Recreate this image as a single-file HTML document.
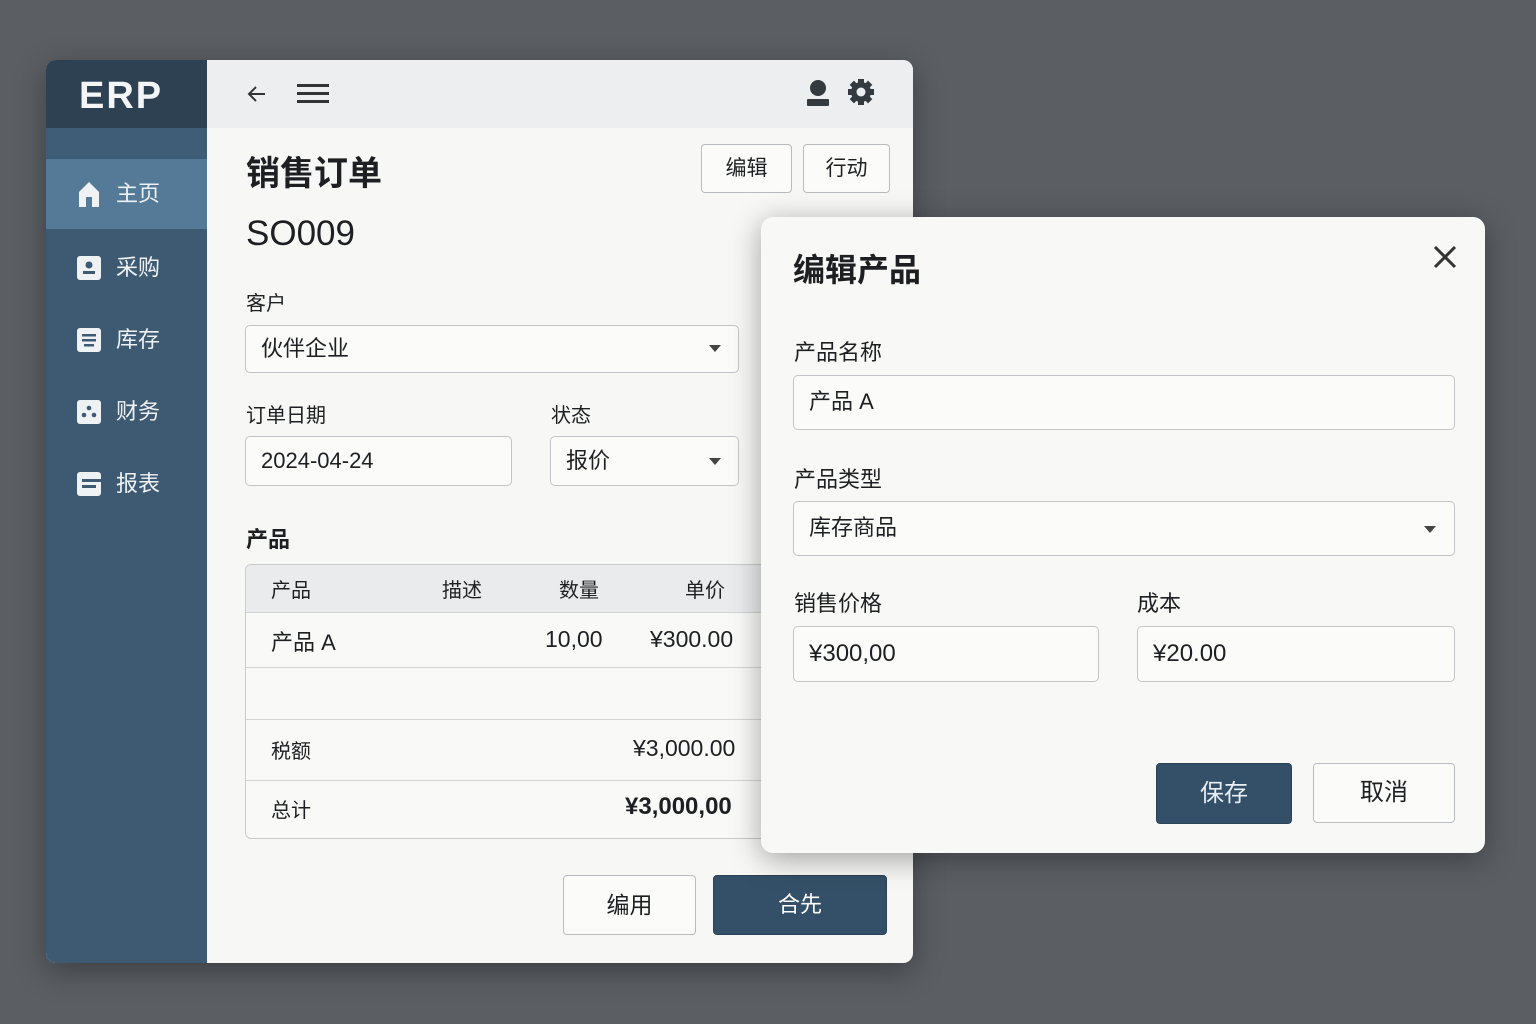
<!DOCTYPE html>
<html><head><meta charset="utf-8"><style>
*{box-sizing:border-box;margin:0;padding:0}
body{width:1536px;height:1024px;background:#5b5f64;font-family:"Liberation Sans","Noto Sans CJK SC",sans-serif;color:#1d1f22;position:relative;overflow:hidden}
.abs{position:absolute}
.win{left:46px;top:60px;width:867px;height:903px;background:#f7f7f5;border-radius:10px;overflow:hidden;box-shadow:0 8px 30px rgba(0,0,0,.35)}
.side{left:0;top:0;width:161px;height:903px;background:#3d5a72}
.logo{left:0;top:0;width:161px;height:68px;background:#2d4152;color:#f3f5f7;font-weight:bold;font-size:38px;letter-spacing:2px;padding:15px 0 0 33px}
.strip{left:0;top:68px;width:161px;height:30px;background:#3f5d76}
.nav{left:0;width:161px;height:70px;color:#eef2f5;font-size:22px;padding-left:70px;line-height:70px}
.nav.act{background:#547a98}
.nav i{position:absolute;left:31px;top:23px;width:24px;height:24px;background:#eef2f5;border-radius:3px}
.hdr{left:161px;top:0;width:706px;height:68px;background:#eceef0}
.t{position:absolute;white-space:nowrap}
.btn{position:absolute;border:1px solid #b8bbbf;border-radius:4px;background:#fbfbfa;text-align:center;font-size:21px}
.inp{position:absolute;border:1.5px solid #c3c5c8;border-radius:5px;background:#fbfbfa;font-size:22px;padding-left:15px}
.caret{position:absolute;width:0;height:0;border-left:6px solid transparent;border-right:6px solid transparent;border-top:7px solid #444}
.dlg{left:761px;top:217px;width:724px;height:636px;background:#f8f8f6;border-radius:12px;box-shadow:0 6px 30px rgba(0,0,0,.35)}
</style></head><body>
<div class="abs win">
 <div class="abs side">
  <div class="abs logo">ERP</div>
  <div class="abs strip"></div>
  <div class="abs nav act" style="top:99px">主页<svg style="position:absolute;left:31px;top:22px" width="24" height="26" viewBox="0 0 24 26"><path d="M2 11 L12 1 L22 11 V26 H15 V16 H9 V26 H2Z" fill="#eef2f5"/></svg></div>
  <div class="abs nav" style="top:173px">采购<i></i><svg style="position:absolute;left:31px;top:23px" width="24" height="24"><circle cx="12" cy="9" r="3.5" fill="#3d5a72"/><rect x="6" y="15" width="12" height="3" fill="#3d5a72"/></svg></div>
  <div class="abs nav" style="top:245px">库存<i></i><svg style="position:absolute;left:31px;top:23px" width="24" height="24"><rect x="5" y="6" width="14" height="2.5" fill="#3d5a72"/><rect x="5" y="11" width="14" height="2.5" fill="#3d5a72"/><rect x="7" y="16" width="10" height="2.5" fill="#3d5a72"/></svg></div>
  <div class="abs nav" style="top:317px">财务<i></i><svg style="position:absolute;left:31px;top:23px" width="24" height="24"><circle cx="12" cy="8" r="2.3" fill="#3d5a72"/><circle cx="7" cy="15" r="2.3" fill="#3d5a72"/><circle cx="17" cy="15" r="2.3" fill="#3d5a72"/></svg></div>
  <div class="abs nav" style="top:389px">报表<i></i><svg style="position:absolute;left:31px;top:23px" width="24" height="24"><rect x="5" y="7" width="19" height="3" fill="#3d5a72"/><rect x="5" y="13" width="14" height="3" fill="#3d5a72"/></svg></div>
 </div>
 <div class="abs hdr">
  <svg class="abs" style="left:38px;top:22px" width="24" height="24" viewBox="0 0 24 24"><path d="M20 12H4M11 5 4 12 11 19" stroke="#333" stroke-width="2" fill="none"/></svg>
  <svg class="abs" style="left:90px;top:22px" width="32" height="22"><rect y="2" width="32" height="3" fill="#333"/><rect y="10" width="32" height="3" fill="#333"/><rect y="18" width="32" height="3" fill="#333"/></svg>
  <svg class="abs" style="left:598px;top:18px" width="26" height="30"><circle cx="13" cy="10" r="8" fill="#333a40"/><rect x="2" y="21" width="22" height="7" rx="1" fill="#333a40"/></svg>
  <svg class="abs" style="left:640px;top:18px" width="28" height="28" viewBox="0 0 28 28"><g fill="#333a40" transform="translate(14 14)"><rect x="-3" y="-13" width="6" height="26"/><rect x="-3" y="-13" width="6" height="26" transform="rotate(45)"/><rect x="-3" y="-13" width="6" height="26" transform="rotate(90)"/><rect x="-3" y="-13" width="6" height="26" transform="rotate(135)"/><circle r="10"/></g><circle cx="14" cy="14" r="4.5" fill="#eceef0"/></svg>
 </div>
 <div class="t" style="left:200px;top:86px;font-size:34px;font-weight:bold">销售订单</div>
 <div class="btn" style="left:655px;top:84px;width:91px;height:49px;line-height:47px">编辑</div>
 <div class="btn" style="left:757px;top:84px;width:87px;height:49px;line-height:47px">行动</div>
 <div class="t" style="left:200px;top:154px;font-size:35px">SO009</div>
 <div class="t" style="left:200px;top:227px;font-size:20px">客户</div>
 <div class="inp" style="left:199px;top:265px;width:494px;height:48px;line-height:45px">伙伴企业</div><div class="caret" style="left:663px;top:285px"></div>
 <div class="t" style="left:200px;top:339px;font-size:20px">订单日期</div>
 <div class="t" style="left:505px;top:339px;font-size:20px">状态</div>
 <div class="inp" style="left:199px;top:376px;width:267px;height:50px;line-height:47px">2024-04-24</div>
 <div class="inp" style="left:504px;top:376px;width:189px;height:50px;line-height:47px">报价</div><div class="caret" style="left:663px;top:398px"></div>
 <div class="t" style="left:200px;top:462px;font-size:22px;font-weight:bold">产品</div>
 <div class="abs" style="left:199px;top:504px;width:700px;height:275px;border:1.5px solid #c8cacc;border-radius:6px;background:#f9f9f8;overflow:hidden;font-size:20px">
  <div class="abs" style="left:0;top:0;width:700px;height:48px;background:#e9ebed;border-bottom:1.5px solid #cfd1d3"></div>
  <div class="t" style="left:25px;top:9px">产品</div><div class="t" style="left:196px;top:9px">描述</div><div class="t" style="left:313px;top:9px">数量</div><div class="t" style="left:439px;top:9px">单价</div>
  <div class="t" style="left:25px;top:60px;font-size:22px">产品 A</div><div class="t" style="left:299px;top:61px;font-size:23px">10,00</div><div class="t" style="left:404px;top:61px;font-size:23px">¥300.00</div>
  <div class="abs" style="left:0;top:102px;width:700px;border-top:1.5px solid #d3d5d7"></div>
  <div class="abs" style="left:0;top:154px;width:700px;border-top:1.5px solid #d3d5d7"></div>
  <div class="t" style="left:25px;top:170px">税额</div><div class="t" style="left:387px;top:170px;font-size:23px">¥3,000.00</div>
  <div class="abs" style="left:0;top:215px;width:700px;border-top:1.5px solid #d3d5d7"></div>
  <div class="t" style="left:25px;top:229px">总计</div><div class="t" style="left:379px;top:228px;font-size:24px;font-weight:bold">¥3,000,00</div>
 </div>
 <div class="btn" style="left:517px;top:815px;width:133px;height:60px;line-height:58px;font-size:23px">编用</div>
 <div class="btn" style="left:667px;top:815px;width:174px;height:60px;line-height:58px;font-size:22px;background:#345068;border-color:#2b4356;color:#fff">合先</div>
</div>
<div class="abs dlg">
 <div class="t" style="left:32px;top:28px;font-size:32px;font-weight:bold">编辑产品</div>
 <svg class="abs" style="left:672px;top:28px" width="24" height="24"><path d="M2 2 22 22M22 2 2 22" stroke="#333" stroke-width="3"/></svg>
 <div class="t" style="left:33px;top:118px;font-size:22px">产品名称</div>
 <div class="inp" style="left:32px;top:158px;width:662px;height:55px;line-height:52px">产品 A</div>
 <div class="t" style="left:33px;top:245px;font-size:22px">产品类型</div>
 <div class="inp" style="left:32px;top:284px;width:662px;height:55px;line-height:52px">库存商品</div><div class="caret" style="left:663px;top:309px"></div>
 <div class="t" style="left:33px;top:369px;font-size:22px">销售价格</div>
 <div class="t" style="left:376px;top:369px;font-size:22px">成本</div>
 <div class="inp" style="left:32px;top:409px;width:306px;height:56px;line-height:53px;font-size:24px">¥300,00</div>
 <div class="inp" style="left:376px;top:409px;width:318px;height:56px;line-height:53px;font-size:24px">¥20.00</div>
 <div class="btn" style="left:395px;top:546px;width:136px;height:61px;line-height:59px;font-size:24px;background:#345068;border-color:#2b4356;color:#e8eef3">保存</div>
 <div class="btn" style="left:552px;top:546px;width:142px;height:60px;line-height:58px;font-size:24px">取消</div>
</div>
</body></html>
